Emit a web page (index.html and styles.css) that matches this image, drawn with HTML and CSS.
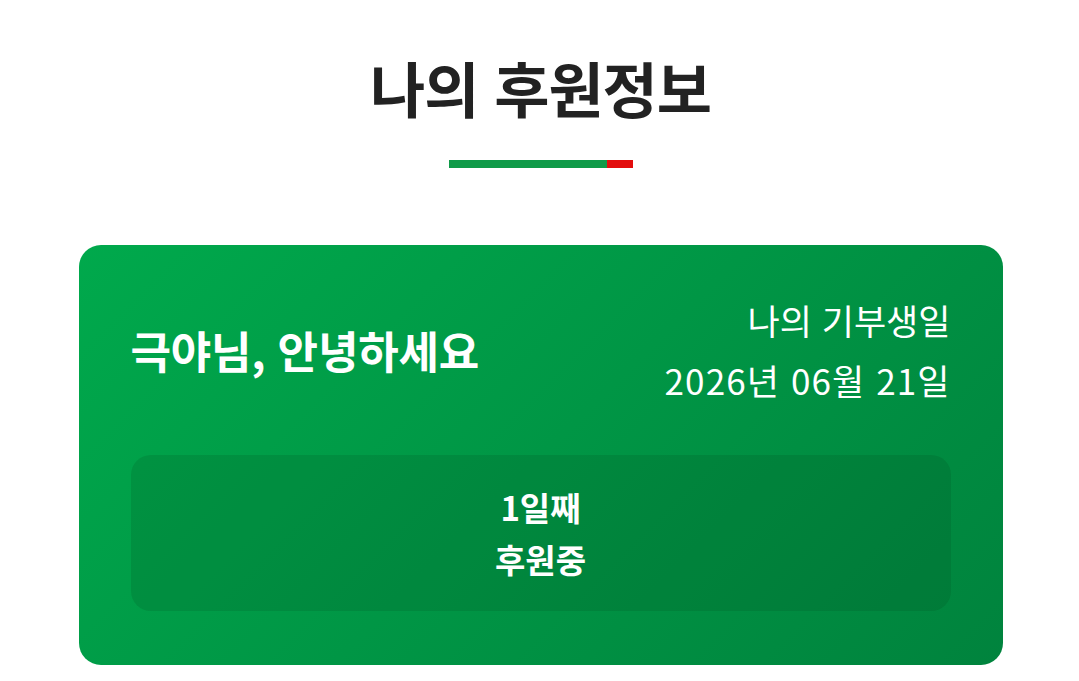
FILE: index.html
```html
<!DOCTYPE html>
<html lang="ko">
  <head>
    <meta charset="UTF-8" />
    <meta name="viewport" content="width=device-width, initial-scale=1" />
    <title>나의 후원정보</title>
    <link rel="stylesheet" href="styles.css">
  </head>
  <body>
    <main class="page">
      <header class="page-head">
        <h1 class="page-title">나의 후원정보</h1>
        <div class="title-bar" aria-hidden="true">
          <span class="bar-green"></span>
          <span class="bar-red"></span>
        </div>
      </header>

      <section class="support-card" aria-label="후원 정보">
        <div class="card-top">
          <p class="greeting">극야님, 안녕하세요</p>
          <div class="birthday">
            <p class="birthday-label">나의 기부생일</p>
            <p class="birthday-date">2026년 06월 21일</p>
          </div>
        </div>
        <div class="days-box">
          <p class="days-count">1일째</p>
          <p class="days-label">후원중</p>
        </div>
      </section>
    </main>
  </body>
</html>
```

FILE: styles.css
```css
/* Base */
* {
  box-sizing: border-box;
}
body {
  margin: 0;
  padding: 0 0 0 2px;
  background: #fff;
  color: #222;
  font-family: "Noto Sans CJK KR", "Noto Sans", sans-serif;
}
p {
  margin: 0;
}
.page {
  width: 924px;
  margin: 0 auto;
  padding-top: 49px;
}

/* Title with two-tone underline */
.page-head {
  display: flex;
  flex-direction: column;
  align-items: center;
}
.page-title {
  margin: 0;
  font-size: 60px;
  font-weight: 700;
  line-height: 76px;
  letter-spacing: -1px;
  color: #222;
}
.title-bar {
  display: flex;
  margin-top: 35px;
  height: 8px;
}
.bar-green {
  width: 158px;
  background: #0f9a48;
}
.bar-red {
  width: 26px;
  background: #e30d0d;
}

/* Green donation card */
.support-card {
  margin-top: 77px;
  height: 420px;
  border-radius: 22px;
  padding: 45px 52px 54px;
  background: linear-gradient(135deg, #00a94c 0%, #009645 50%, #00833d 100%);
  color: #fff;
  display: flex;
  flex-direction: column;
}
.card-top {
  display: flex;
  justify-content: space-between;
  align-items: center;
}
.greeting {
  font-size: 44px;
  font-weight: 700;
  letter-spacing: -0.2px;
}
.birthday {
  text-align: right;
  font-size: 35px;
  line-height: 60px;
}
.birthday-date {
  letter-spacing: 1.1px;
}
.days-box {
  margin-top: auto;
  height: 156px;
  border-radius: 20px;
  background: rgba(0, 60, 20, 0.14);
  display: flex;
  flex-direction: column;
  align-items: center;
  justify-content: center;
  font-size: 33px;
  font-weight: 700;
  line-height: 52px;
}
```
